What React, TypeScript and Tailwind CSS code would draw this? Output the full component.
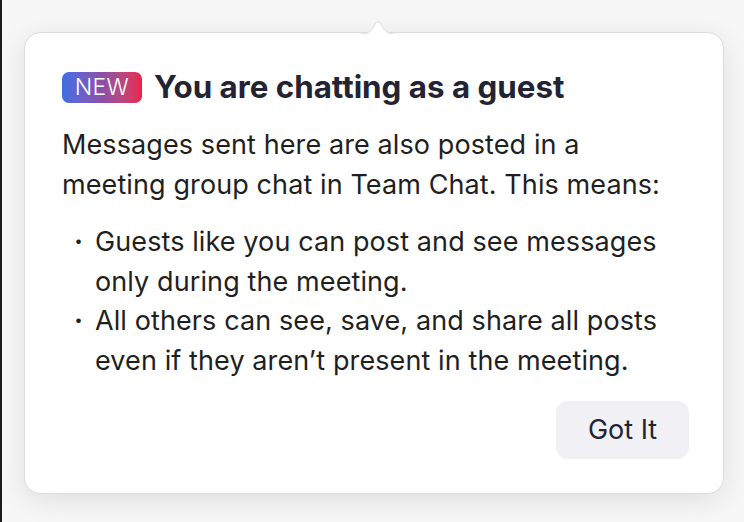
import React from "react";

export default function App() {
  return (
    <div className="w-[744px] h-[522px] bg-[#f7f7f7] flex overflow-hidden" style={{ fontFamily: "Inter, 'Noto Sans', sans-serif" }}>
      <div className="w-[2px] h-full bg-[#1c1c1e]" />
      <div className="flex-1 pl-[22px] pr-[20px] pt-[32px]">
        <div className="relative w-[700px] h-[462px] bg-white rounded-[16px] border border-[#dcdcdc] shadow-[0_6px_28px_rgba(0,0,0,0.10)] pl-[37px] pr-[20px] pt-[37px]">
          <svg className="absolute left-[336px] top-[-13px]" width="34" height="15" viewBox="0 0 34 15">
            <path d="M0 14 C6 14 9 12 12 8 L14 4 C15.5 1.5 18.5 1.5 20 4 L22 8 C25 12 28 14 34 14" fill="white" stroke="#dcdcdc" strokeWidth="1" />
            <rect x="0" y="14" width="34" height="2" fill="white" />
          </svg>
          <div className="flex items-center gap-[12px]">
            <div className="w-[80px] h-[31px] rounded-[7px] bg-gradient-to-r from-[#3a6ee6] via-[#8a4fa8] to-[#e8204a] flex items-center justify-center text-white text-[23px] font-light tracking-[0.3px]">NEW</div>
            <div className="text-[31.3px] font-bold text-[#232333] leading-[34px] whitespace-nowrap">You are chatting as a guest</div>
          </div>
          <p className="mt-[21px] text-[27px] leading-[40px] text-[#1f1f22] tracking-[0.1px] whitespace-nowrap">
            Messages sent here are also posted in a<br />meeting group chat in Team Chat. This means:
          </p>
          <ul className="mt-[17px] text-[27px] leading-[39.5px] text-[#1f1f22] tracking-[0.1px] whitespace-nowrap">
            <li className="flex">
              <span className="w-[33px] shrink-0 pl-[12px] font-bold">·</span>
              <span>Guests like you can post and see messages<br />only during the meeting.</span>
            </li>
            <li className="flex">
              <span className="w-[33px] shrink-0 pl-[12px] font-bold">·</span>
              <span>All others can see, save, and share all posts<br />even if they aren’t present in the meeting.</span>
            </li>
          </ul>
          <div className="flex justify-end mt-[21px] pr-[14px]">
            <button className="w-[133px] h-[58px] rounded-[12px] bg-[#f0f0f5] text-[27px] text-[#232333]">Got It</button>
          </div>
        </div>
      </div>
    </div>
  );
}
